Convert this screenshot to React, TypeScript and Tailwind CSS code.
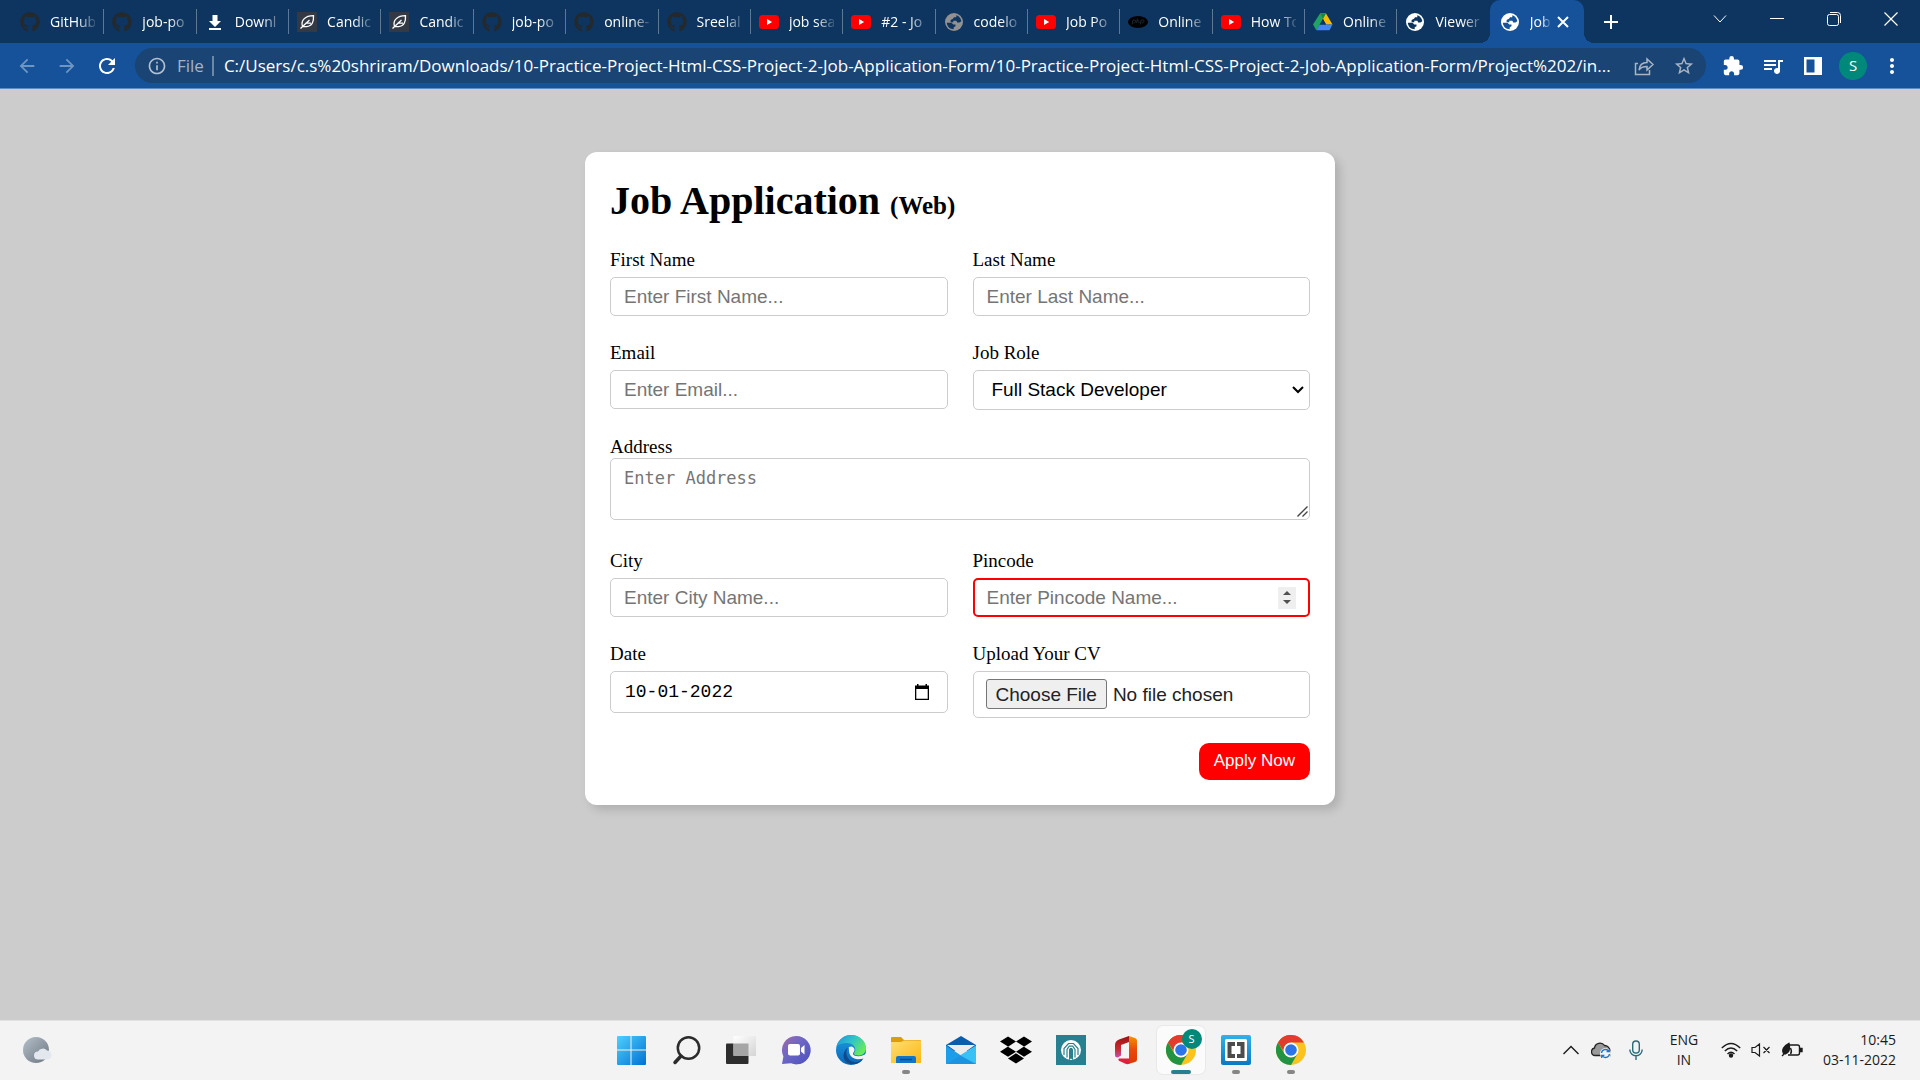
import React from "react";
import { FaDropbox, FaGithub } from "react-icons/fa";
import {
  MdAdd,
  MdArrowBack,
  MdArrowForward,
  MdExtension,
  MdMoreVert,
  MdOutlineInfo,
  MdQueueMusic,
  MdRefresh,
  MdStarBorder,
} from "react-icons/md";

/* ---------- Favicons ---------- */

const GitHubIcon = () => <FaGithub className="size-5 text-[#24292e]" />;

const DownloadIcon = () => (
  <svg viewBox="0 0 20 20" className="size-5 text-white" fill="currentColor">
    <path d="M7.500 3h5v6H16l-6 6-6-6h3.500zM4 16h12v2H4z" />
  </svg>
);

const LeafIcon = () => (
  <svg viewBox="0 0 20 20" className="size-5">
    <rect width="20" height="20" fill="#343a45" />
    <path
      d="M3.500 16.500L12.500 8M5.500 14.500C3.500 8.500 8 3.700 16.500 3.700C16.800 9 15.500 14.300 9.500 14.600H5.500M8.500 11.200H14"
      fill="none"
      stroke="#fff"
      strokeWidth="1.300"
    />
  </svg>
);

const YouTubeIcon = () => (
  <svg viewBox="0 0 20 20" className="size-5">
    <rect y="3" width="20" height="14" rx="3.500" fill="#f00" />
    <path d="M8 7v6l5.200-3z" fill="#fff" />
  </svg>
);

const Globe = ({ land, sea }: { land: string; sea: string }) => (
  <svg viewBox="0 0 20 20" className="size-5">
    <circle cx="10" cy="10" r="9" fill={land} />
    <path
      d="M12.300 3.300C15 4 17 6.500 17.300 9.200L15.500 10.500H13.200L12.400 8.800H9.300V10.300H6.600V8L9 6.800L10 5.300H12.300z"
      fill={sea}
    />
    <path d="M2.800 10.800H7.500L9.300 12.500H11.500V14.300L9.700 15.300V17.300C6 17.300 3 14.500 2.800 10.800z" fill={sea} />
  </svg>
);
const GreyGlobe = () => <Globe land="#919191" sea="#0d3560" />;
const WhiteGlobe = () => <Globe land="#fff" sea="#0d3560" />;

const PhpIcon = () => (
  <svg viewBox="0 0 20 20" className="size-5">
    <ellipse cx="10" cy="10" rx="10" ry="6" fill="#000" />
    <g fill="none" stroke="#1f2833" strokeWidth="1">
      <path d="M4 12.500l1-4.500h1.500q1.500 0 1 1.600t-2 1.400M8.500 11l1-4.500M9 8.700h1.300q1 0 .8 1l-.3 1.400M12.300 12.500l1-4.500h1.500q1.500 0 1 1.600t-2 1.400" />
    </g>
  </svg>
);

const DriveIcon = () => (
  <svg viewBox="0 0 20 20" className="size-5">
    <path d="M7 1.500L10 7l-6.700 11.200L0 12.500z" fill="#1fa463" />
    <path d="M7 1.500h6l6.500 11H13z" fill="#ffba00" />
    <path d="M7 1.500h6L10 7z" fill="#0f8a4c" />
    <path d="M6.600 12.500H19.500L16.500 18.300H3.300z" fill="#4285f4" />
    <path d="M10 7l3 5.500H6.700z" fill="#0d3560" />
  </svg>
);

const TABS: { title: string; Icon: () => React.JSX.Element }[] = [
  { title: "GitHub", Icon: GitHubIcon },
  { title: "job-po", Icon: GitHubIcon },
  { title: "Downl", Icon: DownloadIcon },
  { title: "Candic", Icon: LeafIcon },
  { title: "Candic", Icon: LeafIcon },
  { title: "job-po", Icon: GitHubIcon },
  { title: "online-", Icon: GitHubIcon },
  { title: "Sreelal", Icon: GitHubIcon },
  { title: "job sea", Icon: YouTubeIcon },
  { title: "#2 - Jo", Icon: YouTubeIcon },
  { title: "codelo", Icon: GreyGlobe },
  { title: "Job Po", Icon: YouTubeIcon },
  { title: "Online", Icon: PhpIcon },
  { title: "How To", Icon: YouTubeIcon },
  { title: "Online", Icon: DriveIcon },
  { title: "Viewer", Icon: WhiteGlobe },
];

const URL_TEXT =
  "C:/Users/c.s%20shriram/Downloads/10-Practice-Project-Html-CSS-Project-2-Job-Application-Form/10-Practice-Project-Html-CSS-Project-2-Job-Application-Form/Project%202/in...";

const FADE = "[mask-image:linear-gradient(to_right,black_60%,rgba(0,0,0,0.15))]";

/* ---------- Browser chrome ---------- */

function TabStrip() {
  return (
    <div className="flex h-[43px] bg-[#0d3560] pl-3 text-white">
      <div className="flex w-[1572px] min-w-0" role="tablist">
        {TABS.map(({ title, Icon }, i) => (
          <button
            key={i}
            role="tab"
            aria-selected={false}
            className="flex min-w-0 flex-1 items-center pl-2"
          >
            <span className="shrink-0">
              <Icon />
            </span>
            <span className={"ml-2.5 min-w-0 flex-1 overflow-hidden whitespace-nowrap text-left text-[14px] " + FADE}>
              {title}
            </span>
            <span className={i < 15 ? "ml-2 h-[25px] w-px bg-[#5c7896]" : "ml-2 h-[25px] w-px"} />
          </button>
        ))}
        <div className="relative flex min-w-0 flex-1 items-center rounded-t-[10px] bg-[#15529a] pl-2.5">
          <span className="absolute bottom-0 -left-2.5 size-2.5 bg-[radial-gradient(circle_at_0_0,transparent_10px,#15529a_10px)]" />
          <span className="absolute bottom-0 -right-2.5 size-2.5 bg-[radial-gradient(circle_at_100%_0,transparent_10px,#15529a_10px)]" />
          <span className="shrink-0">
            <Globe land="#fff" sea="#15529a" />
          </span>
          <button
            role="tab"
            aria-selected={true}
            className={"ml-2.5 w-5 shrink-0 overflow-hidden whitespace-nowrap text-left text-[14px] " + FADE}
          >
            Job
          </button>
          <button aria-label="Close tab" className="ml-[7px]">
            <svg viewBox="0 0 12 12" className="size-3" stroke="currentColor" strokeWidth="2">
              <path d="M1 1l10 10M11 1L1 11" />
            </svg>
          </button>
        </div>
      </div>
      <button aria-label="New tab" className="ml-[15px] flex w-6 items-center justify-center">
        <MdAdd className="size-6 shrink-0" />
      </button>
      <div className="ml-auto flex h-[38px] pr-px">
        <button aria-label="Search tabs" className="flex w-[57px] items-center justify-center">
          <svg viewBox="0 0 14 14" className="size-3.5" fill="none" stroke="currentColor">
            <path d="M1 3.500l6 6.500 6-6.500" />
          </svg>
        </button>
        <button aria-label="Minimise" className="flex w-[57px] items-center justify-center">
          <svg viewBox="0 0 14 14" className="size-3.5" stroke="currentColor">
            <path d="M0 6.500h14" />
          </svg>
        </button>
        <button aria-label="Restore" className="flex w-[57px] items-center justify-center">
          <svg viewBox="0 0 14 14" className="size-3.5" fill="none" stroke="currentColor">
            <rect x="0.500" y="2.500" width="11" height="11" rx="2" />
            <path d="M3 .5h7.500q3 0 3 3V11" />
          </svg>
        </button>
        <button aria-label="Close" className="flex w-[57px] items-center justify-center">
          <svg viewBox="0 0 14 14" className="size-3.5" stroke="currentColor" strokeWidth="1.200">
            <path d="M.5.5l13 13M13.500.5l-13 13" />
          </svg>
        </button>
      </div>
    </div>
  );
}

function Toolbar() {
  return (
    <div className="flex h-[46px] items-center border-b border-[#5f8cc0] bg-[#15529a] pl-[7px] pr-2 text-white">
      <button aria-label="Back" className="flex w-10 justify-center text-[#6f95c1]">
        <MdArrowBack className="size-[22px]" />
      </button>
      <button aria-label="Forward" className="flex w-10 justify-center text-[#6f95c1]">
        <MdArrowForward className="size-[22px]" />
      </button>
      <button aria-label="Reload" className="flex w-10 justify-center">
        <MdRefresh className="size-6" />
      </button>
      <div className="ml-2 flex h-[35px] min-w-0 flex-1 items-center rounded-full bg-[#1a4473] pl-3 pr-0.5">
        <MdOutlineInfo className="size-5 shrink-0 text-[#b3c0cf]" />
        <label htmlFor="address-bar" className="ml-2.5 text-[17px] text-[#a3b4c7]">
          File
        </label>
        <span className="ml-2 h-5 w-0.5 bg-[#6d88a6]" />
        <input
          id="address-bar"
          type="text"
          defaultValue={URL_TEXT}
          className="ml-2.5 min-w-0 flex-1 bg-transparent text-[17px] leading-6 text-white outline-none"
        />
        <button aria-label="Share" className="flex w-10 justify-center text-[#a9b5c4]">
          <svg viewBox="0 0 20 20" className="size-5" fill="none" stroke="currentColor" strokeWidth="1.500">
            <path d="M4 7.500H1.500v11h14V14" />
            <path d="M5 14c.5-5 3-7.500 8-7.500V3l6 5.500-6 5.500v-3.500c-4 0-6.500 1-8 3.500z" />
          </svg>
        </button>
        <button aria-label="Bookmark" className="flex w-10 justify-center text-[#a9b5c4]">
          <MdStarBorder className="size-[22px]" />
        </button>
      </div>
      <div className="ml-[7px] flex items-center">
        <button aria-label="Extensions" className="flex w-10 justify-center">
          <MdExtension className="size-[22px]" />
        </button>
        <button aria-label="Media" className="flex w-10 justify-center">
          <MdQueueMusic className="size-6" />
        </button>
        <button aria-label="Side panel" className="flex w-10 justify-center">
          <svg viewBox="0 0 18 18" className="size-[18px]">
            <rect width="18" height="18" fill="#fff" />
            <rect x="2.500" y="2.500" width="8" height="13" fill="#15529a" />
          </svg>
        </button>
        <button
          aria-label="Profile"
          className="ml-1.5 flex size-7 items-center justify-center rounded-full bg-[#00897b] text-[15px]"
        >
          S
        </button>
        <button aria-label="Menu" className="ml-[5px] flex w-10 justify-center">
          <MdMoreVert className="size-6" />
        </button>
      </div>
    </div>
  );
}

/* ---------- Form ---------- */

const BOX = "w-full rounded-[5px] border border-[#ccc] bg-white placeholder:text-[#757575] placeholder:opacity-100";
const ARIAL = "font-['Liberation_Sans',Arial,sans-serif] text-[19px]";

function Field({ id, label, children }: { id: string; label: string; children: React.ReactNode }) {
  return (
    <div className="flex min-w-0 flex-col items-stretch gap-1.5">
      <label htmlFor={id} className="leading-[23px]">
        {label}
      </label>
      {children}
    </div>
  );
}

function JobForm() {
  return (
    <form
      onSubmit={(e) => e.preventDefault()}
      className="w-full max-w-[750px] rounded-xl bg-white p-[25px] font-['Liberation_Serif','Times_New_Roman',serif] text-[19px] text-black shadow-[5px_5px_10px_rgba(0,0,0,0.14)]"
    >
      <h1 className="text-[40px] leading-[48px] font-bold">
        Job Application <span className="text-[25px] leading-none">(Web)</span>
      </h1>
      <div className="mt-[23px] grid grid-cols-2 gap-[25px]">
        <Field id="first" label="First Name">
          <input id="first" type="text" placeholder="Enter First Name..." className={BOX + " h-[39px] px-[13px] " + ARIAL} />
        </Field>
        <Field id="last" label="Last Name">
          <input id="last" type="text" placeholder="Enter Last Name..." className={BOX + " h-[39px] px-[13px] " + ARIAL} />
        </Field>
        <Field id="email" label="Email">
          <input id="email" type="email" placeholder="Enter Email..." className={BOX + " h-[39px] px-[13px] " + ARIAL} />
        </Field>
        <Field id="role" label="Job Role">
          <div className="relative">
            <select id="role" className={BOX + " block h-10 appearance-none px-[18px] " + ARIAL}>
              <option>Full Stack Developer</option>
              <option>Front End Developer</option>
              <option>Back End Developer</option>
            </select>
            <svg
              viewBox="0 0 12 8"
              className="pointer-events-none absolute top-4 right-1.5 h-2 w-3"
              fill="none"
              stroke="#000"
              strokeWidth="2"
            >
              <path d="M1 1l5 5 5-5" />
            </svg>
          </div>
        </Field>
        <div className="col-span-2 flex flex-col pb-1">
          <label htmlFor="address" className="leading-[23px]">
            Address
          </label>
          <div className="relative">
            <textarea
              id="address"
              placeholder="Enter Address"
              className={
                BOX + " block h-[62px] resize-none px-[13px] py-[7px] font-['DejaVu_Sans_Mono',monospace] text-[17px]"
              }
            />
            <svg
              viewBox="0 0 11 11"
              className="pointer-events-none absolute right-0.5 bottom-[3px] size-[11px]"
              fill="none"
              stroke="#444"
              strokeWidth="1.400"
            >
              <path d="M.5 10.500l10-10M5.500 10.500l5-5" />
            </svg>
          </div>
        </div>
        <Field id="city" label="City">
          <input id="city" type="text" placeholder="Enter City Name..." className={BOX + " h-[39px] px-[13px] " + ARIAL} />
        </Field>
        <Field id="pincode" label="Pincode">
          <div className="flex h-[39px] items-center rounded-[5px] border-2 border-[#f00] bg-white pr-3">
            <input
              id="pincode"
              type="number"
              placeholder="Enter Pincode Name..."
              className={
                "h-full min-w-0 flex-1 appearance-none bg-transparent pl-3 outline-none [appearance:textfield] placeholder:text-[#757575] placeholder:opacity-100 " +
                ARIAL
              }
            />
            <div className="flex h-[22px] w-[18px] flex-col bg-[#efefef]">
              <button type="button" aria-label="Increase" className="flex flex-1 items-end justify-center pb-0.5">
                <svg viewBox="0 0 8 4" className="h-1 w-2" fill="#505050">
                  <path d="M0 4l4-4 4 4z" />
                </svg>
              </button>
              <button type="button" aria-label="Decrease" className="flex flex-1 items-start justify-center pt-[3px]">
                <svg viewBox="0 0 8 4" className="h-1 w-2" fill="#505050">
                  <path d="M0 0l4 4 4-4z" />
                </svg>
              </button>
            </div>
          </div>
        </Field>
        <Field id="date" label="Date">
          <div className={BOX + " flex h-[42px] items-center pr-[18px]"}>
            <input
              id="date"
              type="text"
              defaultValue="10-01-2022"
              className="min-w-0 flex-1 bg-transparent pl-3.5 font-['Liberation_Mono','Courier_New',monospace] text-[18px] outline-none"
            />
            <button type="button" aria-label="Open calendar">
              <svg viewBox="0 0 14 16" className="h-4 w-3.5">
                <path d="M0 1.500h2V0h1.500v1.500h7V0H12v1.500h2V16H0zM1.300 5v9.700h11.400V5z" fill="#000" fillRule="evenodd" />
              </svg>
            </button>
          </div>
        </Field>
        <Field id="cv" label="Upload Your CV">
          <input
            id="cv"
            type="file"
            className={
              BOX +
              " h-[47px] px-3 py-[7px] leading-[30px] text-[#222] file:mr-1.5 file:h-[30px] file:rounded-[3px] file:border file:border-solid file:border-[#767676] file:bg-[#efefef] file:px-[9px] file:text-[#222] " +
              ARIAL
            }
          />
        </Field>
      </div>
      <div className="mt-[25px] flex justify-end">
        <button
          type="submit"
          className="h-[37px] rounded-[10px] bg-[#f00] px-[15px] pb-0.5 font-['Liberation_Sans',Arial,sans-serif] text-[17px] text-white"
        >
          Apply Now
        </button>
      </div>
    </form>
  );
}

/* ---------- Taskbar ---------- */

const WindowsLogo = () => (
  <svg viewBox="0 0 30 30" className="size-[30px]">
    <defs>
      <linearGradient id="win" x1="0" y1="0" x2="1" y2="1">
        <stop offset="0" stopColor="#4fd0ff" />
        <stop offset="1" stopColor="#0071d3" />
      </linearGradient>
    </defs>
    <path
      d="M2 1h12.500v13.500H1V2q0-1 1-1zM15.500 1H29q1 0 1 1v12.500H15.500zM1 15.500h13.500V30H2q-1 0-1-1zM15.500 15.500H30V29q0 1-1 1H15.500z"
      fill="url(#win)"
    />
  </svg>
);

const SearchLogo = () => (
  <svg viewBox="0 0 30 30" className="size-[30px]" fill="none" stroke="#2b2b2b">
    <circle cx="17.500" cy="13" r="10.700" strokeWidth="2.500" />
    <path d="M10 21L4 27.500" strokeWidth="3.500" strokeLinecap="round" />
  </svg>
);

const TaskViewLogo = () => (
  <svg viewBox="0 0 30 30" className="size-[30px]">
    <defs>
      <linearGradient id="tv" x1="0" y1="0" x2="1" y2="1">
        <stop offset="0" stopColor="#fff" />
        <stop offset="1" stopColor="#d4d4d4" />
      </linearGradient>
    </defs>
    <rect y="8.500" width="22.500" height="20.500" rx="1" fill="#2d2d2d" />
    <rect x="7.500" y="1" width="22.500" height="20" rx="1" fill="url(#tv)" />
    <path d="M7.500 8.500h15V21h-15z" fill="#a5a5a5" />
  </svg>
);

const ChatLogo = () => (
  <svg viewBox="0 0 30 30" className="size-[30px]">
    <defs>
      <linearGradient id="chat" x1="0" y1="0" x2="1" y2="1">
        <stop offset="0" stopColor="#a268a8" />
        <stop offset=".4" stopColor="#6f68c4" />
        <stop offset="1" stopColor="#4a4fc0" />
      </linearGradient>
    </defs>
    <path d="M15 1a14.200 14.200 0 1 1-5 27.300L1 29l1.400-7.500A14.200 14.200 0 0 1 15 1z" fill="url(#chat)" />
    <rect x="7" y="9" width="12" height="11.500" rx="2" fill="#fff" />
    <path d="M20 13l3.500-3v9.500L20 16.500z" fill="#fff" />
  </svg>
);

const EdgeLogo = () => (
  <svg viewBox="0 0 30 30" className="size-[30px]">
    <defs>
      <linearGradient id="edgeTop" x1="0" y1="0" x2="1" y2=".6">
        <stop offset="0" stopColor="#1f8fd8" />
        <stop offset=".5" stopColor="#2fc3c8" />
        <stop offset="1" stopColor="#66eb5a" />
      </linearGradient>
      <linearGradient id="edgeLeft" x1="0" y1="0" x2="0" y2="1">
        <stop offset="0" stopColor="#1b9de2" />
        <stop offset="1" stopColor="#0a66b8" />
      </linearGradient>
    </defs>
    <circle cx="15" cy="15" r="15" fill="url(#edgeLeft)" />
    <path
      d="M.6 11C3 4 8.500 0 15 0c8.500 0 15 6 15 13 0 5-3.500 7.500-7.500 7.500-3 0-4.500-1-4.500-2s1.300-1.500 1.300-4C19.300 11 16 8 11 8 6 8 2.500 9.500.6 11z"
      fill="url(#edgeTop)"
    />
    <path d="M12 12.500c-3 4-2 11 4 14 4 2 8 0 11.300-3C24 30 13 31.500 9 25.500c-3-4.500-1-10.500 3-13z" fill="#114a8b" />
    <path
      d="M13 12c2.500-1.500 5.500 0 5.500 3 0 1.500-1.500 2.500-1.500 3.700 0 1.300 1.700 2.500 5.500 2.500 3 0 6-1.200 8-3.200l-.5 4c-1.500 1.500-4 2-6 2-6 1-11-2.500-11-8.500 0-1.500-.5-3 0-3.500z"
      fill="#f3f3f3"
    />
  </svg>
);

const FolderLogo = () => (
  <svg viewBox="0 0 30 30" className="size-[30px]">
    <defs>
      <linearGradient id="folder" x1="0" y1="0" x2="1" y2="1">
        <stop offset="0" stopColor="#ffdf73" />
        <stop offset="1" stopColor="#fbb713" />
      </linearGradient>
    </defs>
    <path d="M0 3q0-1 1-1h9l3 3h16q1 0 1 1v4H0z" fill="#dc9c0c" />
    <path d="M0 7h10l3-1.500h17V28H0z" fill="url(#folder)" />
    <path d="M5 28v-5q0-2 2-2h16q2 0 2 2v5z" fill="#1375c9" />
    <path d="M9 24.500h12" stroke="#0a4a8e" strokeWidth="1.500" />
  </svg>
);

const MailLogo = () => (
  <svg viewBox="0 0 30 30" className="size-[30px]">
    <path d="M0 10L15 1l15 9v6H0z" fill="#0b5cab" />
    <path d="M1 10h28L15 20z" fill="#ececec" />
    <path d="M0 10.500L15 20.500V29H0z" fill="#1b9de8" />
    <path d="M30 10.500L0 29h30z" fill="#38c1f5" />
    <path d="M14 20.200L30 29H0z" fill="#1c93e0" />
  </svg>
);

const TealLogo = () => (
  <svg viewBox="0 0 30 30" className="size-[30px]">
    <rect width="30" height="30" fill="#26808f" />
    <circle cx="15" cy="15" r="10" fill="#fff" />
    <path
      d="M8 20v-6.500l4.500-5h5l4.500 5V20M11 22.500v-8l2.300-3.300h3.400L19 14.500v8"
      fill="none"
      stroke="#26808f"
      strokeWidth="1.200"
    />
    <path d="M13 14.500l1-1.500h2l1 1.500V25l-2-1.500-2 1.500z" fill="#26808f" />
  </svg>
);

const OfficeLogo = () => (
  <svg viewBox="0 0 30 30" className="size-[30px]">
    <defs>
      <linearGradient id="officeLeft" x1="0" y1="0" x2="0" y2="1">
        <stop offset="0" stopColor="#9c1212" />
        <stop offset=".6" stopColor="#c92a2f" />
        <stop offset="1" stopColor="#c84fb0" />
      </linearGradient>
      <linearGradient id="officeRight" x1="0" y1="0" x2="0" y2="1">
        <stop offset="0" stopColor="#f59300" />
        <stop offset=".5" stopColor="#e84a0c" />
        <stop offset="1" stopColor="#d83b01" />
      </linearGradient>
    </defs>
    <path d="M18 1L8 4.500Q4 6 4 10v10q0 3 3 2.500l3-2V10l8-3z" fill="url(#officeLeft)" />
    <path d="M18 1l6 2q2 .5 2 2.500v19q0 2-2 2.500l-6 1.700z" fill="url(#officeRight)" />
    <path d="M8 23.500h10.500v5.200q-2 .8-4 .1L8.500 26q-2-1-.5-2.500z" fill="#e01f3d" />
  </svg>
);

const ChromeLogo = () => (
  <svg viewBox="0 0 30 30" className="size-[30px]">
    <circle cx="15" cy="15" r="15" fill="#fcc31e" />
    <path d="M2 7.500A15 15 0 0 1 28 7.500H15z" fill="#e33b2e" />
    <path d="M2 7.500A15 15 0 0 1 15 0v8L9 18.500z" fill="#e33b2e" />
    <path d="M2 7.500A15 15 0 0 0 15 30l6.500-11.200h-13z" fill="#229342" />
    <circle cx="15" cy="15" r="7.500" fill="#fff" />
    <circle cx="15" cy="15" r="5.800" fill="#2b74ea" />
  </svg>
);

const BracketsLogo = () => (
  <svg viewBox="0 0 30 30" className="size-[30px]">
    <defs>
      <linearGradient id="brackets" x1="0" y1="0" x2="0" y2="1">
        <stop offset="0" stopColor="#33b1e8" />
        <stop offset="1" stopColor="#0a78c2" />
      </linearGradient>
    </defs>
    <rect width="30" height="30" rx="2" fill="url(#brackets)" />
    <rect x="4" y="4" width="22" height="22" rx="1.500" fill="#fff" />
    <path d="M6.500 7H14v4h-3.500v8H14v4H6.500zM23.500 7H16v4h3.500v8H16v4h7.500z" fill="#4c4c4c" />
  </svg>
);

const DropboxLogo = () => <FaDropbox className="size-8 text-black" />;

const APPS: { name: string; Icon: () => React.JSX.Element; state?: "open" | "active" }[] = [
  { name: "Start", Icon: WindowsLogo },
  { name: "Search", Icon: SearchLogo },
  { name: "Task view", Icon: TaskViewLogo },
  { name: "Chat", Icon: ChatLogo },
  { name: "Edge", Icon: EdgeLogo },
  { name: "File Explorer", Icon: FolderLogo, state: "open" },
  { name: "Mail", Icon: MailLogo },
  { name: "Dropbox", Icon: DropboxLogo },
  { name: "Support", Icon: TealLogo },
  { name: "Office", Icon: OfficeLogo },
  { name: "Chrome profile", Icon: ChromeLogo, state: "active" },
  { name: "Brackets", Icon: BracketsLogo, state: "open" },
  { name: "Chrome", Icon: ChromeLogo, state: "open" },
];

function Taskbar() {
  return (
    <footer className="grid h-[60px] grid-cols-[1fr_auto_1fr] items-center bg-[#f3f3f3] text-[#1b1b1b] shadow-[inset_0_1px_0_#e2e2e2]">
      <button aria-label="Weather" className="ml-[22px] w-fit">
        <svg viewBox="0 0 30 28" className="h-7 w-[30px]">
          <defs>
            <linearGradient id="moon" x1="0" y1="0" x2="1" y2="1">
              <stop offset="0" stopColor="#b3bfca" />
              <stop offset="1" stopColor="#6c7680" />
            </linearGradient>
          </defs>
          <circle cx="14" cy="14" r="13" fill="url(#moon)" />
          <path d="M16 23.500a4 4 0 0 1 0-8 5.500 5.500 0 0 1 9-1 4.500 4.500 0 0 1 0 9z" fill="#e3e8ee" />
        </svg>
      </button>
      <div className="flex pl-px">
        {APPS.map(({ name, Icon, state }) => (
          <div key={name} className="flex w-[55px] justify-center">
            <button
              aria-label={name}
              className={
                "relative flex size-12 items-center justify-center rounded-md" +
                (state === "active" ? " bg-[#fbfbfb] shadow-[0_0_0_1px_#e9e9e9]" : "")
              }
            >
              <Icon />
              {state === "open" && <span className="absolute bottom-0 h-1 w-2 rounded-full bg-[#868686]" />}
              {state === "active" && (
                <>
                  <span className="absolute bottom-0 h-1 w-5 rounded-full bg-[#26808f]" />
                  <span className="absolute top-[3px] right-[3px] flex size-5 items-center justify-center rounded-full bg-[#00897b] text-[11px] text-white">
                    S
                  </span>
                </>
              )}
            </button>
          </div>
        ))}
      </div>
      <div className="flex items-center justify-end pr-6 text-[14px] leading-5">
        <button aria-label="Show hidden icons">
          <svg viewBox="0 0 16 16" className="size-4" fill="none" stroke="currentColor" strokeWidth="1.400">
            <path d="M.5 12L8 4.500 15.500 12" />
          </svg>
        </button>
        <button aria-label="OneDrive" className="ml-3">
          <svg viewBox="0 0 20 18" className="h-[18px] w-5">
            <path
              d="M4 14.500A3.800 3.800 0 0 1 3.500 7 5.500 5.500 0 0 1 13.500 4.500 5.500 5.500 0 0 1 19 10v4.500z"
              fill="#9a9a9a"
              stroke="#222"
              strokeWidth="1.300"
            />
            <circle cx="14.500" cy="12.500" r="5.500" fill="#f3f3f3" />
            <path
              d="M10.500 12a4 4 0 0 1 7.300-1.700M18.500 13a4 4 0 0 1-7.300 1.700M18.300 8v2.700h-2.700M10.700 17v-2.700h2.700"
              fill="none"
              stroke="#1876d2"
              strokeWidth="1.300"
            />
          </svg>
        </button>
        <button aria-label="Microphone" className="ml-[18px]">
          <svg viewBox="0 0 14 20" className="h-5 w-3.5" fill="none" stroke="#2a6b7a" strokeWidth="1.400">
            <rect x="3.700" y="1" width="6.600" height="12" rx="3.300" />
            <path d="M.8 9.500a6.200 6.200 0 0 0 12.400 0M7 16v4" />
          </svg>
        </button>
        <button aria-label="Language" className="ml-6 w-[34px] text-center">
          ENG
          <br />
          IN
        </button>
        <button aria-label="Network and battery" className="ml-5 flex items-center gap-2.5">
          <svg viewBox="0 0 20 16" className="h-4 w-5" fill="none" stroke="currentColor" strokeWidth="1.400">
            <path d="M.8 6Q10-3 19.200 6M3.800 9Q10 3 16.200 9M6.500 12Q10 8.500 13.500 12" />
            <circle cx="10" cy="13.500" r="1.500" fill="currentColor" />
          </svg>
          <svg viewBox="0 0 20 16" className="h-4 w-5" fill="none" stroke="currentColor" strokeWidth="1.200">
            <path d="M1 5.500h3L8.500 2v12L4 10.500H1zM12.500 5l6 6M18.500 5l-6 6" />
          </svg>
          <svg viewBox="0 0 22 16" className="h-4 w-[22px]" fill="none" stroke="currentColor" strokeWidth="1.400">
            <path d="M8 3h8.500q2 0 2 2v6q0 2-2 2H7" />
            <path d="M19 6.500h2v3h-2z" fill="currentColor" />
            <path d="M1 14l2-2C0 8 3 4 8 1.500c1 4 1 9-4 10.500" fill="currentColor" />
            <path d="M9.500 12c1.500-2 1-4 0-6" />
          </svg>
        </button>
        <time className="ml-5 text-right whitespace-nowrap">
          10:45
          <br />
          03-11-2022
        </time>
      </div>
    </footer>
  );
}

export default function App() {
  return (
    <div className="flex min-h-screen flex-col bg-[#ccc] font-['Open_Sans','Noto_Sans',sans-serif]">
      <header>
        <TabStrip />
        <Toolbar />
      </header>
      <main className="flex flex-1 flex-col items-center px-4 pt-[63px] pb-16">
        <JobForm />
      </main>
      <Taskbar />
    </div>
  );
}
